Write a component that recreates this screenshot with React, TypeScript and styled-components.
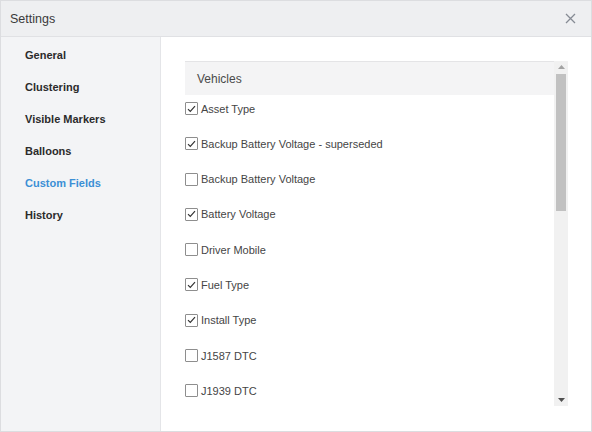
import React from "react";
import styled, { createGlobalStyle } from "styled-components";

const GlobalStyle = createGlobalStyle`
  html, body { margin: 0; padding: 0; background: #ffffff; }
  body { font-family: "Liberation Sans", Arial, sans-serif; }
  * { box-sizing: border-box; }
`;

const Dialog = styled.div`
  width: 592px;
  height: 432px;
  border: 1px solid #dcdde0;
  display: flex;
  flex-direction: column;
  background: #ffffff;
`;

const Header = styled.div`
  height: 36px;
  flex: none;
  display: flex;
  align-items: center;
  justify-content: space-between;
  padding: 0 15px 0 9px;
  background: #eeeff1;
  border-bottom: 1px solid #e0e1e4;
`;

const Title = styled.h1`
  margin: 0;
  font-size: 12.5px;
  font-weight: normal;
  color: #3a3a3a;
`;

const CloseButton = styled.button`
  width: 12px;
  height: 12px;
  padding: 0;
  border: none;
  background: transparent;
  display: flex;
  align-items: center;
  justify-content: center;
  cursor: pointer;
`;

const Body = styled.div`
  flex: 1;
  display: flex;
  min-height: 0;
`;

const Sidebar = styled.nav`
  width: 160px;
  flex: none;
  background: #f3f4f6;
  border-right: 1px solid #e4e5e8;
  padding-top: 2px;
  display: flex;
  flex-direction: column;
`;

const NavItem = styled.div<{ $active?: boolean }>`
  height: 32px;
  display: flex;
  align-items: center;
  padding-left: 24px;
  font-size: 11px;
  font-weight: bold;
  color: ${(p) => (p.$active ? "#3b8fd5" : "#2b2b2b")};
  cursor: pointer;
`;

const Content = styled.main`
  flex: 1;
  padding: 24px 23px 25px 24px;
  display: flex;
  min-width: 0;
`;

const ListViewport = styled.div`
  flex: 1;
  min-width: 0;
  overflow: hidden;
`;

/* Scroll rail drawn beside the list: arrow buttons and a thumb */
const ScrollRail = styled.div`
  width: 14px;
  flex: none;
  background: #f1f1f1;
  display: flex;
  flex-direction: column;
`;

const RailButton = styled.div`
  height: 12px;
  flex: none;
  display: flex;
  align-items: center;
  justify-content: center;
`;

const RailTrack = styled.div`
  flex: 1;
  padding: 1px 2px;
  display: flex;
  flex-direction: column;
`;

const RailThumb = styled.div`
  height: 137px;
  background: #c1c1c1;
`;

const GroupHeader = styled.div`
  height: 34px;
  display: flex;
  align-items: center;
  padding-left: 12px;
  background: #f4f4f5;
  border-top: 1px solid #e4e4e6;
  font-size: 12px;
  color: #4a4a4a;
`;

const FieldList = styled.ul`
  list-style: none;
  margin: 0;
  padding: 7px 0 0 0;
  display: flex;
  flex-direction: column;
  gap: 22.3px;
`;

const FieldRow = styled.li`
  display: flex;
  align-items: center;
  gap: 3px;
  height: 13px;
  font-size: 11px;
  color: #454545;
  cursor: pointer;
`;

const Box = styled.span`
  width: 13px;
  height: 13px;
  flex: none;
  border: 1px solid #8e8e8e;
  border-radius: 1px;
  background: #ffffff;
  display: flex;
  align-items: center;
  justify-content: center;
`;

const fields: { label: string; checked: boolean }[] = [
  { label: "Asset Type", checked: true },
  { label: "Backup Battery Voltage - superseded", checked: true },
  { label: "Backup Battery Voltage", checked: false },
  { label: "Battery Voltage", checked: true },
  { label: "Driver Mobile", checked: false },
  { label: "Fuel Type", checked: true },
  { label: "Install Type", checked: true },
  { label: "J1587 DTC", checked: false },
  { label: "J1939 DTC", checked: false },
];

const navItems = [
  "General",
  "Clustering",
  "Visible Markers",
  "Balloons",
  "Custom Fields",
  "History",
];

const CheckMark = () => (
  <svg width="9" height="8" viewBox="0 0 9 8">
    <polyline
      points="1,4.2 3.3,6.5 8,1.2"
      fill="none"
      stroke="#333"
      strokeWidth="1.2"
    />
  </svg>
);

const CloseIcon = () => (
  <svg width="11" height="11" viewBox="0 0 11 11">
    <path d="M1 1 L10 10 M10 1 L1 10" stroke="#868b94" strokeWidth="1.3" />
  </svg>
);

const Arrow = ({ up }: { up?: boolean }) => (
  <svg width="7" height="4" viewBox="0 0 7 4">
    <polygon
      points={up ? "0,4 7,4 3.5,0" : "0,0 7,0 3.5,4"}
      fill={up ? "#a3a3a3" : "#505050"}
    />
  </svg>
);

export default function App() {
  return (
    <>
      <GlobalStyle />
      <Dialog>
        <Header>
          <Title>Settings</Title>
          <CloseButton aria-label="Close">
            <CloseIcon />
          </CloseButton>
        </Header>
        <Body>
          <Sidebar>
            {navItems.map((n) => (
              <NavItem key={n} $active={n === "Custom Fields"}>
                {n}
              </NavItem>
            ))}
          </Sidebar>
          <Content>
            <ListViewport>
              <GroupHeader>Vehicles</GroupHeader>
              <FieldList>
                {fields.map((f) => (
                  <FieldRow key={f.label}>
                    <Box>{f.checked && <CheckMark />}</Box>
                    {f.label}
                  </FieldRow>
                ))}
              </FieldList>
            </ListViewport>
            <ScrollRail>
              <RailButton>
                <Arrow up />
              </RailButton>
              <RailTrack>
                <RailThumb />
              </RailTrack>
              <RailButton>
                <Arrow />
              </RailButton>
            </ScrollRail>
          </Content>
        </Body>
      </Dialog>
    </>
  );
}
